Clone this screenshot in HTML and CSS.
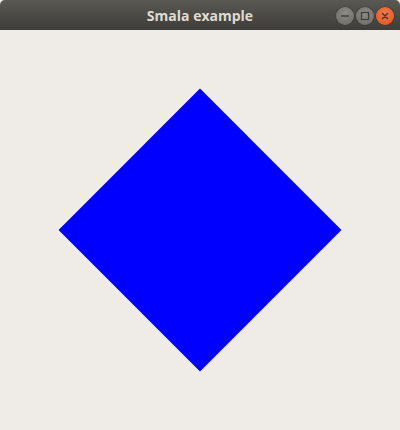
FILE: index.html
```html
<!DOCTYPE html>
<html>
<head>
<meta charset="utf-8">
<title>Smala example</title>
<link rel="stylesheet" href="styles.css">
</head>
<body>
<div class="window">
  <header class="titlebar">
    <span class="title">Smala example</span>
    <div class="controls">
      <span class="btn btn-min"><svg width="18" height="18" viewBox="0 0 18 18"><line x1="5" y1="9" x2="13" y2="9" stroke="#3c3b37" stroke-width="1.4"/></svg></span>
      <span class="btn btn-max"><svg width="18" height="18" viewBox="0 0 18 18"><rect x="5.5" y="5.5" width="7" height="7" fill="none" stroke="#3c3b37" stroke-width="1.2"/></svg></span>
      <span class="btn btn-close"><svg width="18" height="18" viewBox="0 0 18 18"><path d="M6.5 6.5 L11.5 11.5 M11.5 6.5 L6.5 11.5" stroke="#3c3b37" stroke-width="1.5" stroke-linecap="round"/></svg></span>
    </div>
  </header>
  <main class="canvas">
    <div class="diamond"></div>
  </main>
</div>
</body>
</html>
```
FILE: styles.css
```css
html, body {
  margin: 0;
  padding: 0;
  background: #efebe7;
}
.window {
  width: 400px;
  height: 430px;
  display: flex;
  flex-direction: column;
}
.titlebar {
  height: 30px;
  flex: none;
  display: flex;
  align-items: center;
  justify-content: center;
  background: linear-gradient(#5a5852, #3e3d39);
  border-radius: 5px 5px 0 0;
  position: relative;
}
.title {
  font-family: "Open Sans", "DejaVu Sans", sans-serif;
  font-weight: 700;
  font-size: 14px;
  color: #dfdbd2;
  padding-top: 1px;
}
.controls {
  position: absolute;
  right: 6px;
  top: 6.5px;
  display: flex;
  gap: 2px;
}
.btn {
  width: 18px;
  height: 18px;
  border-radius: 50%;
  display: flex;
  align-items: center;
  justify-content: center;
  background: radial-gradient(circle at 50% 35%, #8d8b85, #6b6963);
  box-shadow: 0 0 0 0.5px #3a3935;
}
.btn svg {
  display: block;
}
.btn-close {
  background: radial-gradient(circle at 50% 35%, #f47a4a, #e0531f);
}
.canvas {
  flex: 1;
  display: flex;
  align-items: center;
  justify-content: center;
}
.diamond {
  width: 200px;
  height: 200px;
  background: #0000ff;
  transform: rotate(45deg);
}
```
